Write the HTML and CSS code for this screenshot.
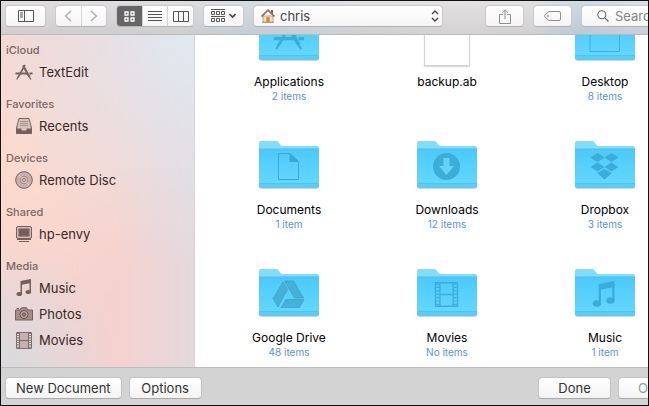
FILE: index.html
```html
<!DOCTYPE html>
<html lang="en">
<head>
  <meta charset="UTF-8">
  <title>Open</title>
  <link rel="stylesheet" href="styles.css">
</head>
<body>
  <!-- shared shapes -->
  <svg class="defs" aria-hidden="true">
    <defs>
      <linearGradient id="front" x1="0" y1="0" x2="0" y2="1">
        <stop offset="0" stop-color="#4cc8f8"/>
        <stop offset="1" stop-color="#66daff"/>
      </linearGradient>
    </defs>
    <symbol id="folder" viewBox="0 0 60 48">
      <path d="M0 45V2Q0 0 2 0H17Q19 0 20 2L21 3.500Q22 5 24 5H58Q60 5 60 7V45Z" fill="#83dcfa"/>
      <path d="M0 8H60V45Q60 47 58 47H2Q0 47 0 45Z" fill="url(#front)"/>
      <path d="M0 7.700H60" stroke="#55c2ea" stroke-width="0.700"/>
      <path d="M0 42H60V45Q60 47 58 47H2Q0 47 0 45Z" fill="#5accf5"/>
      <path d="M0 42.500H60" stroke="#4fbfe8" stroke-width="0.700"/>
      <path d="M1.500 47.300H58.500" stroke="#9cc3d2" stroke-width="0.800"/>
    </symbol>
    <symbol id="apps" viewBox="0 0 18 16">
      <g fill="none" stroke="currentColor">
        <path d="M8 1.500L14.500 13" stroke-width="2.200"/>
        <path d="M10 1L3 13.500" stroke-width="1.600"/>
        <path d="M0.500 9.500H12M14.500 9.500H17.500" stroke-width="1.800"/>
        <path d="M14.500 13L15.800 15.500M3 13L1.800 15.500" stroke-width="1.200"/>
      </g>
    </symbol>
    <symbol id="film" viewBox="0 0 16 17">
      <path d="M0.500 0.500H15.500V16.500H0.500ZM3.500 0.500V16.500M12.500 0.500V16.500M3.500 8.500H12.500" fill="none" stroke="currentColor" stroke-width="0.900"/>
      <path d="M2 1V16M14 1V16" fill="none" stroke="currentColor" stroke-width="2" stroke-dasharray="0.800 1.500"/>
    </symbol>
    <symbol id="note" viewBox="0 0 16 18">
      <path d="M4.500 2L15 0V4L6 5.700V14.500H4.500Z" fill="currentColor"/>
      <path d="M13.500 2H15V12.500H13.500Z" fill="currentColor"/>
      <ellipse cx="3.300" cy="15" rx="2.800" ry="2.100" fill="currentColor"/>
      <ellipse cx="12.300" cy="13" rx="2.800" ry="2.100" fill="currentColor"/>
    </symbol>
  </svg>

  <div class="window">
    <header class="toolbar">
      <button class="tool" aria-label="Toggle sidebar">
        <svg width="16" height="12" viewBox="0 0 16 12"><path d="M0.500 0.500H15.500V11.500H0.500ZM6.500 0.500V11.500M2 3H5M2 5H5M2 7H5" fill="none" stroke="#555"/></svg>
      </button>

      <div class="group">
        <button class="seg" aria-label="Back">
          <svg width="8" height="12" viewBox="0 0 8 12"><path d="M7 1L1.500 6L7 11" fill="none" stroke="#aaa" stroke-width="1.300"/></svg>
        </button>
        <button class="seg" aria-label="Forward">
          <svg width="8" height="12" viewBox="0 0 8 12"><path d="M1 1L6.500 6L1 11" fill="none" stroke="#aaa" stroke-width="1.300"/></svg>
        </button>
      </div>

      <div class="group views">
        <button class="seg active" aria-label="Icon view">
          <svg width="11" height="11" viewBox="0 0 11 11"><path d="M1 1H4V4H1ZM7 1H10V4H7ZM1 7H4V10H1ZM7 7H10V10H7Z" fill="none" stroke="#fff" stroke-width="1.300"/></svg>
        </button>
        <button class="seg" aria-label="List view">
          <svg width="14" height="11" viewBox="0 0 14 11"><path d="M0 0.500H14M0 3.500H14M0 6.500H14M0 9.500H14" stroke="#555"/></svg>
        </button>
        <button class="seg" aria-label="Column view">
          <svg width="16" height="11" viewBox="0 0 16 11"><path d="M0.500 0.500H15.500V10.500H0.500ZM5.500 0.500V10.500M10.500 0.500V10.500" fill="none" stroke="#555"/></svg>
        </button>
      </div>

      <button class="tool" aria-label="Arrange by">
        <svg width="25" height="14" viewBox="0 0 25 14">
          <path d="M0 0.500H14M0 7.500H14" stroke="#555"/>
          <path d="M0.500 2.500H3.500V5.500H0.500ZM5.500 2.500H8.500V5.500H5.500ZM10.500 2.500H13.500V5.500H10.500ZM0.500 9.500H3.500V12.500H0.500ZM5.500 9.500H8.500V12.500H5.500ZM10.500 9.500H13.500V12.500H10.500Z" fill="none" stroke="#555"/>
          <path d="M18.500 5L21.500 8L24.500 5" fill="none" stroke="#444" stroke-width="1.600"/>
        </svg>
      </button>

      <div class="path">
        <svg class="path-home" width="14" height="14" viewBox="0 0 14 14">
          <path d="M2 7H12V13H2Z" fill="#f1e2c8" stroke="#ad9577" stroke-width="0.800"/>
          <path d="M10 1H12V5H10Z" fill="#9b5a3a"/>
          <path d="M0.500 7.500L7 1.200L13.500 7.500" fill="none" stroke="#907664" stroke-width="1.800"/>
          <path d="M5.200 8H8.800V13H5.200Z" fill="#e8862d"/>
          <path d="M1 13.500H13" stroke="#a3a08a"/>
        </svg>
        <select class="path-select" aria-label="Folder">
          <option>chris</option>
        </select>
        <svg class="path-arrows" width="8" height="12" viewBox="0 0 8 12"><path d="M1 4L4 1L7 4M1 8L4 11L7 8" fill="none" stroke="#444" stroke-width="1.400"/></svg>
      </div>

      <button class="tool share" aria-label="Share">
        <svg width="12" height="15" viewBox="0 0 12 15"><path d="M4 5.500H0.500V14.500H11.500V5.500H8M6 10V1M3 3.700L6 0.800L9 3.700" fill="none" stroke="#8e8e8e"/></svg>
      </button>
      <button class="tool" aria-label="Tags">
        <svg width="17" height="10" viewBox="0 0 17 10"><path d="M5 0.500H15Q16.500 0.500 16.500 2V8Q16.500 9.500 15 9.500H5L1 6.200Q0 5 1 3.800Z" fill="none" stroke="#8e8e8e"/><circle cx="4" cy="5" r="0.900" fill="#8e8e8e"/></svg>
      </button>

      <label class="search">
        <svg width="12" height="12" viewBox="0 0 12 12"><circle cx="4.800" cy="4.800" r="4" fill="none" stroke="#666" stroke-width="1.100"/><path d="M7.800 7.800L11.500 11.500" stroke="#666" stroke-width="1.200"/></svg>
        <input type="search" placeholder="Search" aria-label="Search">
      </label>
    </header>

    <div class="content">
      <nav class="sidebar">
        <section>
          <h2>iCloud</h2>
          <a href="#"><svg width="18" height="16"><use href="#apps"/></svg>TextEdit</a>
        </section>
        <section>
          <h2>Favorites</h2>
          <a href="#">
            <svg width="18" height="16" viewBox="0 0 18 16">
              <path d="M4 0.500H14L16.500 10V15.500H1.500V10Z" fill="#dcc2bd" stroke="currentColor"/>
              <path d="M5 3.500H13M5 5.500H13M5 7.500H13" stroke="#93807c" stroke-width="0.800"/>
              <path d="M1.500 10.500H6L7 12.500H11L12 10.500H16.500V15.500H1.500Z" fill="currentColor"/>
            </svg>Recents
          </a>
        </section>
        <section>
          <h2>Devices</h2>
          <a href="#">
            <svg width="18" height="18" viewBox="0 0 18 18">
              <circle cx="9" cy="9" r="8.300" fill="#cbb0ac" stroke="currentColor"/>
              <circle cx="9" cy="9" r="3.800" fill="#d9c0bc" stroke="#957c78" stroke-width="0.800"/>
              <circle cx="9" cy="9" r="1.500" fill="#eadad7" stroke="currentColor" stroke-width="0.800"/>
              <path d="M4 4L7 7M11 11L14 14" stroke="#eadad7" stroke-width="0.800"/>
            </svg>Remote Disc
          </a>
        </section>
        <section>
          <h2>Shared</h2>
          <a href="#">
            <svg width="18" height="18" viewBox="0 0 18 18">
              <rect x="1.500" y="1.500" width="15" height="12" rx="1.500" fill="#d4b9b5" stroke="currentColor"/>
              <rect x="3.500" y="3.500" width="11" height="8" fill="currentColor"/>
              <path d="M2 14.500H16M4 16.500H14" stroke="currentColor" stroke-width="1.200"/>
            </svg>hp-envy
          </a>
        </section>
        <section>
          <h2>Media</h2>
          <a href="#"><svg width="18" height="18"><use href="#note"/></svg>Music</a>
          <a href="#">
            <svg width="18" height="14" viewBox="0 0 18 14">
              <path d="M0.500 3H5L6.500 0.700H11.500L13 3H17.500V13H0.500Z" fill="#a58c8a" stroke="currentColor"/>
              <path d="M1.500 1.500H4" stroke="currentColor"/>
              <circle cx="9" cy="7.500" r="4" fill="#c9afac" stroke="#665351"/>
              <circle cx="9" cy="7.500" r="1.900" fill="#927b79" stroke="#665351" stroke-width="0.700"/>
            </svg>Photos
          </a>
          <a href="#"><svg width="18" height="17"><path d="M4.500 1H13.500V16H4.500Z" fill="#c4b0b0"/><use href="#film"/></svg>Movies</a>
        </section>
      </nav>

      <main class="files">
        <div class="file">
          <div class="icon"><svg width="60" height="48"><use href="#folder"/><use href="#apps" class="mark" x="14" y="8" width="32" height="30"/></svg></div>
          <span class="name">Applications</span>
          <span class="count">2 items</span>
        </div>
        <div class="file">
          <div class="icon"><div class="paper"></div></div>
          <span class="name">backup.ab</span>
        </div>
        <div class="file">
          <div class="icon">
            <svg width="60" height="48"><use href="#folder"/><path d="M15 17.500H44.500V38.500H15Z" fill="none" stroke="#3ab0e0"/></svg>
          </div>
          <span class="name">Desktop</span>
          <span class="count">8 items</span>
        </div>

        <div class="file">
          <div class="icon">
            <svg width="60" height="48"><use href="#folder"/><path d="M19.500 12.500H31L39.500 20.500V38.500H19.500Z" fill="none" stroke="#38a9d6"/><path d="M30.500 12V21H40Z" fill="#38a9d6"/></svg>
          </div>
          <span class="name">Documents</span>
          <span class="count">1 item</span>
        </div>
        <div class="file">
          <div class="icon">
            <svg width="60" height="48"><use href="#folder"/><circle cx="29.500" cy="25.500" r="13.500" fill="#3aadd9"/><path d="M26.500 17H32.500V25H37L29.500 34L22 25H26.500Z" fill="#64d3fa"/></svg>
          </div>
          <span class="name">Downloads</span>
          <span class="count">12 items</span>
        </div>
        <div class="file">
          <div class="icon">
            <svg width="60" height="48"><use href="#folder"/><path d="M22.500 12L29.500 16.500L22.500 21L15.500 16.500ZM36.500 12L43.500 16.500L36.500 21L29.500 16.500ZM22.500 21.500L29.500 26L22.500 30.500L15.500 26ZM36.500 21.500L43.500 26L36.500 30.500L29.500 26ZM22 32L29.500 28L37 32L29.500 38.500Z" fill="#3aaddb"/></svg>
          </div>
          <span class="name">Dropbox</span>
          <span class="count">3 items</span>
        </div>

        <div class="file">
          <div class="icon">
            <svg width="60" height="48"><use href="#folder"/><path d="M24 13L28.500 20.500L19 38L14 29.500ZM25.500 12H34.500L44.500 29H35.500ZM27 30.500H45L40.500 38.500H22Z" fill="#47b0d9" stroke="#389fca" stroke-width="0.700"/></svg>
          </div>
          <span class="name">Google Drive</span>
          <span class="count">48 items</span>
        </div>
        <div class="file">
          <div class="icon"><svg width="60" height="48"><use href="#folder"/><use href="#film" class="mark" x="17" y="13" width="25" height="25"/></svg></div>
          <span class="name">Movies</span>
          <span class="count">No items</span>
        </div>
        <div class="file">
          <div class="icon"><svg width="60" height="48"><use href="#folder"/><use href="#note" class="mark" x="17" y="12" width="24" height="27"/></svg></div>
          <span class="name">Music</span>
          <span class="count">1 item</span>
        </div>
      </main>
    </div>

    <footer class="footer">
      <button class="push">New Document</button>
      <button class="push">Options</button>
      <button class="push done">Done</button>
      <button class="push" disabled>Open</button>
    </footer>
  </div>
</body>
</html>
```

FILE: styles.css
```css
* {
  box-sizing: border-box;
}

body {
  margin: 0;
  height: 100vh;
  border: 1px solid #111;
  overflow: hidden;
  font-family: Inter, "Liberation Sans", sans-serif;
  font-size: 13px;
  color: #000;
}

.defs {
  position: absolute;
  width: 0;
  height: 0;
}

/* the dialog runs a little past the right edge */
.window {
  display: flex;
  flex-direction: column;
  width: calc(100% + 50px);
  height: 100%;
}

button,
input,
select {
  font: inherit;
  margin: 0;
}

svg {
  flex: none;
}

/* toolbar */
.toolbar {
  display: flex;
  gap: 9px;
  height: 34px;
  padding: 4px 4px 0;
  border-bottom: 1px solid #b9babd;
  background: linear-gradient(rgba(255, 255, 255, 0.2), rgba(150, 150, 150, 0.12)),
    linear-gradient(90deg, #dad5d7 0%, #d7d5d8 25%, #cad5dc 37%, #d7d8da 52%, #dedadb 66%, #dad8da 76%, #bfd1dc 83%, #d2d6df 92%);
}

.tool,
.group,
.path,
.search {
  flex: none;
  display: flex;
  align-items: center;
  justify-content: center;
  height: 22px;
  padding: 0;
  border: 1px solid #cbc9cb;
  border-bottom-color: #b2b0b2;
  border-radius: 4px;
  background: linear-gradient(#fff, #f5f5f5);
}

.tool {
  width: 41px;
}

.share {
  margin-left: 33px;
}

.share,
.share + .tool {
  width: 39px;
}

.group {
  width: 52px;
  overflow: hidden;
}

.views {
  width: 78px;
}

.seg {
  flex: 1;
  display: flex;
  align-items: center;
  justify-content: center;
  height: 100%;
  padding: 0;
  border: 0;
  background: none;
}

.seg + .seg {
  border-left: 1px solid #d4d4d4;
}

.seg.active {
  background: #666;
}

.path {
  position: relative;
  width: 190px;
}

.path-home,
.path-arrows {
  position: absolute;
  pointer-events: none;
}

.path-home {
  left: 7px;
}

.path-arrows {
  right: 3px;
}

.path-select {
  width: 100%;
  height: 100%;
  padding: 0 16px 0 26px;
  border: 0;
  appearance: none;
  background: none;
  color: #444;
}

.search {
  flex: 1;
  justify-content: flex-start;
  gap: 6px;
  padding-left: 15px;
}

.search input {
  flex: 1;
  min-width: 0;
  padding: 0;
  border: 0;
  outline: 0;
  background: none;
}

.search input::placeholder {
  color: #858585;
}

/* middle */
.content {
  flex: 1;
  display: flex;
  min-height: 0;
}

.sidebar {
  flex: none;
  width: 194px;
  padding-top: 6px;
  border-right: 1px solid #d8d3d8;
  overflow: hidden;
  background: radial-gradient(circle at 100% 0%, #e0e8f0 0%, rgba(226, 230, 238, 0) 60%),
    radial-gradient(circle at 0% 100%, #d9dade 0%, rgba(222, 216, 220, 0) 32%),
    radial-gradient(circle at 0% 38%, #fedacc 0%, rgba(254, 218, 204, 0) 60%),
    linear-gradient(90deg, #f3d4d2 0%, #f5d1ce 60%, #e4d9dd 100%);
}

.sidebar section {
  margin-bottom: 10px;
}

.sidebar h2 {
  margin: 0;
  padding-left: 5px;
  font-size: 11px;
  font-weight: 500;
  line-height: 18px;
  color: #7c6664;
}

.sidebar a {
  display: flex;
  align-items: center;
  gap: 6px;
  height: 26px;
  padding-left: 14px;
  color: #3a2827;
  text-decoration: none;
}

.sidebar svg {
  color: #76605e;
}

.files {
  flex: 1;
  display: grid;
  grid-template-columns: repeat(3, 158px);
  align-content: end;
  row-gap: 31px;
  padding: 0 0 9px 15px;
  overflow: hidden;
  background: #fff;
}

.file {
  display: flex;
  flex-direction: column;
  align-items: center;
}

.icon {
  display: flex;
  align-items: center;
  justify-content: center;
  height: 64px;
  margin-bottom: 5px;
}

.mark {
  color: #3aaddb;
}

.paper {
  width: 46px;
  height: 58px;
  border: 1px solid #d4d4d4;
  background: #fff;
  box-shadow: 0 1px 1px #ddd;
}

.name {
  font-size: 12px;
  line-height: 16px;
}

.count {
  font-size: 10px;
  line-height: 12px;
  color: #5e91dc;
}

/* bottom bar */
.footer {
  display: flex;
  align-items: center;
  gap: 7px;
  height: 38px;
  padding: 2px 7px 0 4px;
  border-top: 1px solid #bdbdbd;
  background: #d3d3d3;
}

.push {
  flex: none;
  min-width: 73px;
  height: 22px;
  padding: 0 10px;
  border: 1px solid #c2c2c2;
  border-bottom-color: #aaa;
  border-radius: 4px;
  background: linear-gradient(#fff, #f3f3f3);
  color: #333;
}

.push:disabled {
  color: #999;
}

.done {
  margin-left: auto;
}
```
